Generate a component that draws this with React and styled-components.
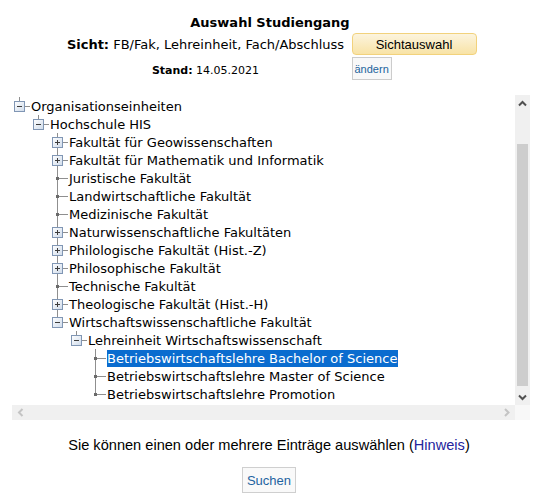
import React, { useId, useLayoutEffect, useRef } from "react"
import styled, { createGlobalStyle } from "styled-components"

const GlobalStyle = createGlobalStyle`
  html, body {
    margin: 0;
    padding: 0;
    background: #fff;
  }
  body {
    font-family: "DejaVu Sans", Verdana, sans-serif;
    color: #000;
  }
`

const tree = {
  label: "Organisationseinheiten",
  open: true,
  children: [
    {
      label: "Hochschule HIS",
      open: true,
      children: [
        { label: "Fakultät für Geowissenschaften", closed: true },
        { label: "Fakultät für Mathematik und Informatik", closed: true },
        { label: "Juristische Fakultät" },
        { label: "Landwirtschaftliche Fakultät" },
        { label: "Medizinische Fakultät" },
        { label: "Naturwissenschaftliche Fakultäten", closed: true },
        { label: "Philologische Fakultät (Hist.-Z)", closed: true },
        { label: "Philosophische Fakultät", closed: true },
        { label: "Technische Fakultät" },
        { label: "Theologische Fakultät (Hist.-H)", closed: true },
        {
          label: "Wirtschaftswissenschaftliche Fakultät",
          open: true,
          children: [
            {
              label: "Lehreinheit Wirtschaftswissenschaft",
              open: true,
              children: [
                { label: "Betriebswirtschaftslehre Bachelor of Science", selected: true },
                { label: "Betriebswirtschaftslehre Master of Science" },
                { label: "Betriebswirtschaftslehre Promotion" },
              ],
            },
          ],
        },
      ],
    },
  ],
}

function flatten(node, guides, isLast, out) {
  out.push({ node, guides, isLast })
  if (node.open && node.children) {
    node.children.forEach((child, i) =>
      flatten(child, [...guides, !isLast], i === node.children.length - 1, out)
    )
  }
  return out
}

const LINE = "#8f8f8f"

function Guide({ line }) {
  return (
    <Cell width="19" height="18">
      {line && <line x1="7.5" y1="0" x2="7.5" y2="18" stroke={LINE} />}
    </Cell>
  )
}

function Connector({ kind, last }) {
  const id = useId()
  const isBox = kind === "open" || kind === "closed"
  return (
    <Cell width="19" height="18">
      <defs>
        <linearGradient id={id} x1="0" y1="0" x2="1" y2="1">
          <stop offset="0" stopColor="#ffffff" />
          <stop offset="1" stopColor="#cfdbea" />
        </linearGradient>
      </defs>
      <line x1="7.5" y1="0" x2="7.5" y2={last ? 9.5 : 18} stroke={LINE} />
      <line x1={isBox ? 12 : 7} y1="9.5" x2="18" y2="9.5" stroke={LINE} />
      {isBox && (
        <>
          <rect x="2.5" y="4.5" width="10" height="10" fill={`url(#${id})`} stroke="#8096b4" />
          <line x1="5" y1="9.5" x2="10" y2="9.5" stroke="#3c3c3c" />
          {kind === "closed" && <line x1="7.5" y1="7" x2="7.5" y2="12" stroke="#3c3c3c" />}
        </>
      )}
      {!isBox && <rect x="6" y="8" width="3" height="3" fill="#6a6a6a" />}
    </Cell>
  )
}

// chevron for the scrollbar buttons, dir = up | down | left | right
function Chevron({ dir, color }) {
  const pts = {
    up: "4,9.5 7.5,6 11,9.5",
    down: "4,6.5 7.5,10 11,6.5",
    left: "9.5,4 6,7.5 9.5,11",
    right: "6,4 9.5,7.5 6,11",
  }[dir]
  return (
    <ArrowSvg width="15" height="15" viewBox="0 0 15 15">
      <polyline points={pts} fill="none" stroke={color} strokeWidth="2" />
    </ArrowSvg>
  )
}

export default function App() {
  const scrollRef = useRef(null)
  const rows = flatten(tree, [], true, [])

  useLayoutEffect(() => {
    const el = scrollRef.current
    if (el) el.scrollTop = el.scrollHeight
  }, [])

  return (
    <Page>
      <GlobalStyle />
      <HeaderGrid>
        <Title>Auswahl Studiengang</Title>
        <InfoLine>
          <b>Sicht:</b> FB/Fak, Lehreinheit, Fach/Abschluss
        </InfoLine>
        <ViewButton>Sichtauswahl</ViewButton>
        <StandLine>
          <b>Stand:</b> 14.05.2021
        </StandLine>
        <SmallButton>ändern</SmallButton>
      </HeaderGrid>

      <TreeFrame>
        <Viewport ref={scrollRef}>
          <TreeContent>
            {rows.map(({ node, guides, isLast }, i) => (
              <Row key={i}>
                {guides.map((g, j) => (
                  <Guide key={j} line={g} />
                ))}
                <Connector
                  kind={node.open ? "open" : node.closed ? "closed" : "leaf"}
                  last={isLast}
                />
                <Label $selected={node.selected}>{node.label}</Label>
              </Row>
            ))}
          </TreeContent>
        </Viewport>

        <VBar>
          <VButton>
            <Chevron dir="up" color="#505050" />
          </VButton>
          <VTrack>
            <VThumb />
          </VTrack>
          <VButton>
            <Chevron dir="down" color="#505050" />
          </VButton>
        </VBar>

        <HBar>
          <HButton>
            <Chevron dir="left" color="#c4c4c4" />
          </HButton>
          <HButton>
            <Chevron dir="right" color="#c4c4c4" />
          </HButton>
        </HBar>
        <Corner />
      </TreeFrame>

      <Hint>
        Sie können einen oder mehrere Einträge auswählen (<HintLink>Hinweis</HintLink>)
      </Hint>
      <SearchButton>Suchen</SearchButton>
    </Page>
  )
}

const Page = styled.div`
  width: 538px;
  padding-top: 14px;
  display: flex;
  flex-direction: column;
  align-items: center;
`

const HeaderGrid = styled.div`
  display: grid;
  grid-template-columns: 284px 125px;
  column-gap: 4px;
  row-gap: 2px;
  align-items: center;
  margin-left: 2px;
`

const Title = styled.div`
  grid-column: 1 / span 2;
  text-align: center;
  font-weight: bold;
  font-size: 13px;
  line-height: 17px;
`

const InfoLine = styled.div`
  text-align: center;
  font-size: 13px;
  white-space: nowrap;
`

const StandLine = styled.div`
  text-align: center;
  font-size: 11px;
  padding-top: 3px;
`

const ViewButton = styled.button`
  width: 125px;
  height: 22px;
  padding: 0;
  border: 1px solid #f2d27c;
  border-radius: 4px;
  background: linear-gradient(180deg, #fcf4de 0%, #f8e3a6 100%);
  font-family: "Liberation Sans", Arial, sans-serif;
  font-size: 13px;
  color: #000;
`

const SmallButton = styled.button`
  justify-self: start;
  height: 23px;
  padding: 0 2px;
  border: 1px solid #cccccc;
  background: #f8f8f8;
  font-family: "Liberation Sans", Arial, sans-serif;
  font-size: 11px;
  color: #22649c;
`

const TreeFrame = styled.div`
  align-self: flex-start;
  margin: 15px 0 0 12px;
  width: 518px;
  height: 325px;
  display: grid;
  grid-template-columns: 1fr 15px;
  grid-template-rows: 1fr 15px;
`

const Viewport = styled.div`
  overflow: hidden;
`

const TreeContent = styled.div`
  padding: 47px 0 2px 0;
`

const Row = styled.div`
  display: flex;
  align-items: center;
  height: 18px;
`

const Cell = styled.svg`
  display: block;
  flex: none;
  width: 19px;
  height: 18px;
`

const Label = styled.span`
  font-size: 13px;
  line-height: 17px;
  white-space: nowrap;
  padding: 0 1px 0 0;
  background: ${(p) => (p.$selected ? "#0a6ccf" : "transparent")};
  color: ${(p) => (p.$selected ? "#fff" : "#000")};
`

const VBar = styled.div`
  display: flex;
  flex-direction: column;
  background: #f0f0f0;
`

const VButton = styled.div`
  flex: none;
  height: 17px;
  display: flex;
  align-items: center;
  justify-content: center;
`

const VTrack = styled.div`
  flex: 1;
  display: flex;
  flex-direction: column;
  justify-content: flex-end;
  padding-bottom: 2px;
`

const VThumb = styled.div`
  height: 242px;
  margin: 0 2px;
  background: #cdcdcd;
`

const HBar = styled.div`
  display: flex;
  justify-content: space-between;
  background: #f0f0f0;
`

const HButton = styled.div`
  width: 17px;
  display: flex;
  align-items: center;
  justify-content: center;
`

const ArrowSvg = styled.svg`
  display: block;
  width: 15px;
  height: 15px;
`

const Corner = styled.div`
  background: #f8f8f8;
`

const Hint = styled.div`
  margin-top: 17px;
  font-family: "Liberation Sans", Arial, sans-serif;
  font-size: 14.6px;
  line-height: 17px;
`

const HintLink = styled.span`
  color: #24249c;
`

const SearchButton = styled.button`
  margin-top: 13px;
  height: 26px;
  padding: 0 4px;
  border: 1px solid #cfcfcf;
  background: #f9f9f9;
  font-family: "Liberation Sans", Arial, sans-serif;
  font-size: 13px;
  color: #1f63a0;
`
